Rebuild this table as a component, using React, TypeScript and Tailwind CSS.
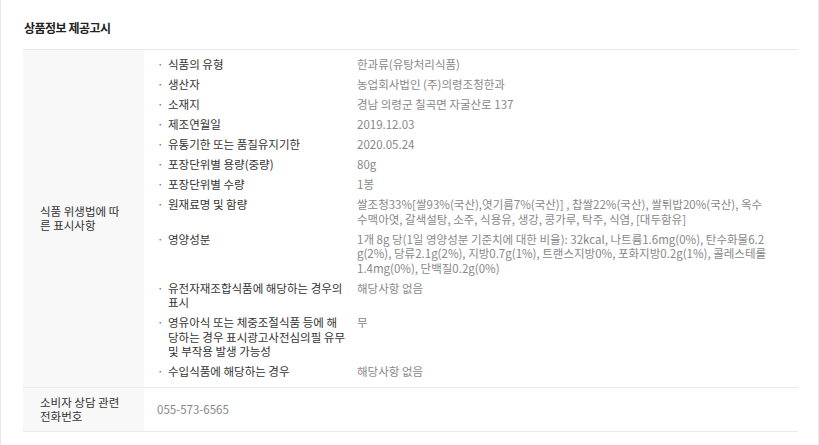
const items: { label: string; value: string }[] = [
  { label: '식품의 유형', value: '한과류(유탕처리식품)' },
  { label: '생산자', value: '농업회사법인 (주)의령조청한과' },
  { label: '소재지', value: '경남 의령군 칠곡면 자굴산로 137' },
  { label: '제조연월일', value: '2019.12.03' },
  { label: '유통기한 또는 품질유지기한', value: '2020.05.24' },
  { label: '포장단위별 용량(중량)', value: '80g' },
  { label: '포장단위별 수량', value: '1봉' },
  {
    label: '원재료명 및 함량',
    value:
      '쌀조청33%[쌀93%(국산),엿기름7%(국산)] , 찹쌀22%(국산), 쌀튀밥20%(국산), 옥수수맥아엿, 갈색설탕, 소주, 식용유, 생강, 콩가루, 탁주, 식염, [대두함유]',
  },
  {
    label: '영양성분',
    value:
      '1개 8g 당(1일 영양성분 기준치에 대한 비율): 32kcal, 나트륨1.6mg(0%), 탄수화물6.2g(2%), 당류2.1g(2%), 지방0.7g(1%), 트랜스지방0%, 포화지방0.2g(1%), 콜레스테롤1.4mg(0%), 단백질0.2g(0%)',
  },
  { label: '유전자재조합식품에 해당하는 경우의 표시', value: '해당사항 없음' },
  {
    label: '영유아식 또는 체중조절식품 등에 해당하는 경우 표시광고사전심의필 유무 및 부작용 발생 가능성',
    value: '무',
  },
  { label: '수입식품에 해당하는 경우', value: '해당사항 없음' },
];

const font = { fontFamily: '"Noto Sans CJK KR", "Noto Sans", sans-serif' };

export default function App() {
  return (
    <div
      style={font}
      className="w-[819px] h-[445px] bg-white border-l border-r border-[#e8e8e8] overflow-hidden"
    >
      {/* Title */}
      <h2 className="pl-[23px] pt-[19px] pb-[13px] text-[12px] leading-[17px] font-bold text-[#222] tracking-[-0.5px]">
        상품정보 제공고시
      </h2>

      {/* Table */}
      <div className="ml-[22px] w-[775px] border-t border-[#ebebeb] text-[11.5px] leading-[14.5px]">
        <div className="flex border-b border-[#ebebeb]">
          <div className="w-[121px] shrink-0 bg-[#f8f8f8] pl-[17px] flex items-center text-[#333] whitespace-nowrap">
            <span>
              식품 위생법에 따
              <br />른 표시사항
            </span>
          </div>
          <div className="flex-1 pl-[13px] pr-[28px] pt-[7px] pb-[8px] flex flex-col gap-[5.5px]">
            {items.map((item) => (
              <div key={item.label} className="flex">
                <span className="w-[11px] shrink-0 text-[#666]">·</span>
                <span className="w-[189px] shrink-0 pr-[10px] text-[#333] break-all">{item.label}</span>
                <span className="flex-1 text-[#888] break-all">{item.value}</span>
              </div>
            ))}
          </div>
        </div>
        <div className="flex border-b border-[#ebebeb]">
          <div className="w-[121px] shrink-0 bg-[#f8f8f8] pl-[17px] py-[7px] text-[#333] whitespace-nowrap">
            소비자 상담 관련
            <br />전화번호
          </div>
          <div className="flex-1 pl-[13px] flex items-center text-[#888]">055-573-6565</div>
        </div>
      </div>
    </div>
  );
}
